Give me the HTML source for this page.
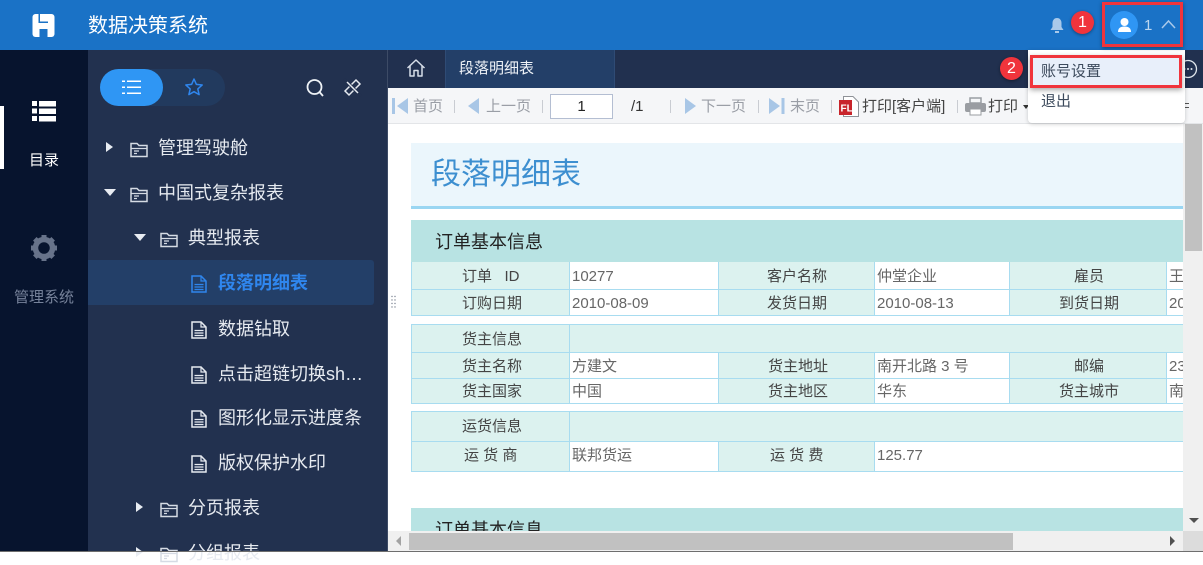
<!DOCTYPE html>
<html lang="zh"><head><meta charset="utf-8"><title>数据决策系统</title>
<style>
html,body{margin:0;padding:0}
body{width:1203px;height:552px;overflow:hidden;position:relative;background:#fff;font-family:"Liberation Sans","Noto Sans CJK SC",sans-serif}
div,span,svg{position:absolute;box-sizing:border-box}
.t{white-space:nowrap;line-height:20px}
.tree{color:#e6eaf0;font-size:18px;line-height:24px;white-space:nowrap;margin-top:1px}
.tb{font-size:15px;color:#9a9ea6;white-space:nowrap;line-height:20px;top:97px}
.sep{width:1px;height:13px;background:#c9ccd2;top:100px}
.c{font-size:15px;line-height:20px;white-space:nowrap;color:#444;text-align:center;margin-top:2px}
.v{font-size:15px;line-height:20px;white-space:nowrap;color:#666;margin-top:2px}
.b{background:#a8dcf0}
.lab{background:#dcf2ef}
</style></head><body>

<!-- header -->
<div style="left:0;top:0;width:1203px;height:50px;background:#1a72c6"></div>
<svg style="left:32px;top:14px" width="23" height="23" viewBox="0 0 23 23"><rect x="0.500" y="0" width="22" height="23" rx="3" fill="#fff"/><path d="M6.500 0H8V7.500H16V9H6.500Z" fill="#1a72c6"/><rect x="7.500" y="15" width="8" height="8" fill="#1a72c6"/></svg>
<div class="t" style="left:88px;top:12px;font-size:20px;line-height:28px;color:#fff">数据决策系统</div>

<!-- left rail -->
<div style="left:0;top:50px;width:88px;height:502px;background:#07142e"></div>
<div style="left:0;top:106px;width:4px;height:63px;background:#fff"></div>
<svg style="left:32px;top:100px" width="24" height="22" viewBox="0 0 24 22" fill="#fff"><rect width="5" height="5" y="1"/><rect width="5" height="5" y="8.500"/><rect width="5" height="5" y="16"/><rect x="7" width="17" height="5.500" y="1"/><rect x="7" width="17" height="5.500" y="8.500"/><rect x="7" width="17" height="5.500" y="16"/></svg>
<div class="t" style="left:29px;top:151px;font-size:15px;color:#fff">目录</div>
<svg style="left:30px;top:234px" width="28" height="28" viewBox="0 0 28 28"><circle cx="14" cy="14" r="8.500" fill="none" stroke="#67738a" stroke-width="5.500"/><g stroke="#67738a" stroke-width="5"><path d="M14 1V6M14 22V27M1 14H6M22 14H27M4.800 4.800L8.300 8.300M19.700 19.700L23.200 23.200M4.800 23.200L8.300 19.700M19.700 8.300L23.200 4.800"/></g></svg>
<div class="t" style="left:14px;top:288px;font-size:15px;color:#76829a">管理系统</div>

<!-- tree panel -->
<div style="left:88px;top:50px;width:299px;height:502px;background:#22314f"></div>
<div style="left:387px;top:50px;width:1px;height:502px;background:#3d4b66"></div>
<div style="left:100px;top:69px;width:125px;height:37px;border-radius:19px;background:#223a5e"></div>
<div style="left:100px;top:69px;width:63px;height:37px;border-radius:19px;background:#2f96f4"></div>
<svg style="left:122px;top:79px" width="20" height="17" viewBox="0 0 20 17" fill="#fff"><rect x="0" y="1.500" width="3" height="1.500"/><rect x="0" y="7.500" width="3" height="1.500"/><rect x="0" y="13.500" width="3" height="1.500"/><rect x="5" y="1.500" width="14" height="1.500"/><rect x="5" y="7.500" width="14" height="1.500"/><rect x="5" y="13.500" width="14" height="1.500"/></svg>
<svg style="left:184px;top:77px" width="20" height="20" viewBox="0 0 20 20"><path d="M10 2L12.400 7.400L18.200 8L13.800 11.900L15.100 17.600L10 14.700L4.900 17.600L6.200 11.900L1.800 8L7.600 7.400Z" fill="none" stroke="#2f86ee" stroke-width="1.500" stroke-linejoin="round"/></svg>
<svg style="left:305px;top:78px" width="20" height="20" viewBox="0 0 20 20"><circle cx="9.500" cy="9" r="7" fill="none" stroke="#eef2f6" stroke-width="1.800"/><path d="M14.500 14L18 18" stroke="#eef2f6" stroke-width="1.800"/></svg>
<svg style="left:343px;top:78px" width="19" height="19" viewBox="0 0 19 19" fill="none" stroke="#e6eaf0" stroke-width="1.500"><path d="M2 13L13 2L17 6L6 17Z"/><path d="M1 1L18 18" stroke="#22314f" stroke-width="3"/><path d="M4 4L15 15"/></svg>

<svg width="0" height="0" style="left:0;top:0"><defs>
<symbol id="fo" viewBox="0 0 18 18"><path d="M1 15.500V2.500H7L9 4.500H17V15.500Z" fill="none" stroke="#d5dbe4" stroke-width="1.500"/><path d="M1 7.500H17M4 10H9M4 12.500H7" stroke="#d5dbe4" stroke-width="1.200"/></symbol>
<symbol id="fi" viewBox="0 0 16 18"><path d="M1 1H10L15 6V17H1Z" fill="none" stroke="#e6eaf0" stroke-width="1.500"/><path d="M10 1V6H15" fill="none" stroke="#e6eaf0" stroke-width="1.200"/><path d="M3.500 9.500H12.500M3.500 12H12.500M3.500 14.500H12.500" stroke="#e6eaf0" stroke-width="1.300"/></symbol>
<symbol id="fb" viewBox="0 0 16 18"><path d="M1 1H10L15 6V17H1Z" fill="none" stroke="#2f86ee" stroke-width="1.500"/><path d="M10 1V6H15" fill="none" stroke="#2f86ee" stroke-width="1.200"/><path d="M3.500 9.500H12.500M3.500 12H12.500M3.500 14.500H12.500" stroke="#2f86ee" stroke-width="1.300"/></symbol>
</defs></svg>

<!-- tree rows -->
<div style="left:106px;top:142px;border-left:7px solid #e8ecf2;border-top:5px solid transparent;border-bottom:5px solid transparent"></div>
<svg style="left:130px;top:141px" width="18" height="18"><use href="#fo"/></svg>
<div class="tree" style="left:158px;top:135px">管理驾驶舱</div>

<div style="left:104px;top:189px;border-top:7px solid #e8ecf2;border-left:6px solid transparent;border-right:6px solid transparent"></div>
<svg style="left:130px;top:186px" width="18" height="18"><use href="#fo"/></svg>
<div class="tree" style="left:158px;top:180px">中国式复杂报表</div>

<div style="left:134px;top:234px;border-top:7px solid #e8ecf2;border-left:6px solid transparent;border-right:6px solid transparent"></div>
<svg style="left:160px;top:231px" width="18" height="18"><use href="#fo"/></svg>
<div class="tree" style="left:188px;top:225px">典型报表</div>

<div style="left:88px;top:260px;width:286px;height:45px;background:#233f68;border-radius:0 3px 3px 0"></div>
<svg style="left:191px;top:275px" width="16" height="18"><use href="#fb"/></svg>
<div class="tree" style="left:218px;top:270px;color:#2f86ee;font-weight:bold">段落明细表</div>

<svg style="left:191px;top:321px" width="16" height="18"><use href="#fi"/></svg>
<div class="tree" style="left:218px;top:316px">数据钻取</div>
<svg style="left:191px;top:366px" width="16" height="18"><use href="#fi"/></svg>
<div class="tree" style="left:218px;top:361px">点击超链切换sh…</div>
<svg style="left:191px;top:410px" width="16" height="18"><use href="#fi"/></svg>
<div class="tree" style="left:218px;top:405px">图形化显示进度条</div>
<svg style="left:191px;top:455px" width="16" height="18"><use href="#fi"/></svg>
<div class="tree" style="left:218px;top:450px">版权保护水印</div>

<div style="left:136px;top:502px;border-left:7px solid #e8ecf2;border-top:5px solid transparent;border-bottom:5px solid transparent"></div>
<svg style="left:160px;top:501px" width="18" height="18"><use href="#fo"/></svg>
<div class="tree" style="left:188px;top:495px">分页报表</div>
<div style="left:136px;top:547px;border-left:7px solid #e8ecf2;border-top:5px solid transparent;border-bottom:5px solid transparent"></div>
<svg style="left:160px;top:546px" width="18" height="18"><use href="#fo"/></svg>
<div class="tree" style="left:188px;top:540px">分组报表</div>

<!-- tab bar -->
<div style="left:388px;top:50px;width:815px;height:38px;background:#21304f"></div>
<div style="left:445px;top:50px;width:170px;height:38px;background:#233f68;border-left:1px solid #2f4b75;border-right:1px solid #2f4b75"></div>
<svg style="left:406px;top:58px" width="20" height="20" viewBox="0 0 20 20" fill="none" stroke="#d6dde8" stroke-width="1.500"><path d="M1.500 10L10 2L18.500 10M4 8V18H8V12.500H12V18H16V8" stroke-linejoin="round"/></svg>
<div class="t" style="left:459px;top:59px;font-size:15px;color:#eef2f7">段落明细表</div>
<svg style="left:1178px;top:59px" width="20" height="20" viewBox="0 0 20 20"><circle cx="10" cy="10" r="8.500" fill="none" stroke="#dfe5ec" stroke-width="1.300"/><circle cx="6.500" cy="10" r="1" fill="#dfe5ec"/><circle cx="10" cy="10" r="1" fill="#dfe5ec"/><circle cx="13.500" cy="10" r="1" fill="#dfe5ec"/></svg>

<!-- toolbar -->
<div style="left:388px;top:88px;width:815px;height:36px;background:#f5f6f8;border-bottom:1px solid #e3e5e8"></div>
<svg style="left:392px;top:97px" width="17" height="18" viewBox="0 0 17 18" fill="#a8c6e6"><rect x="0" y="1" width="3" height="16"/><path d="M16 1V17L5 9Z"/></svg>
<div class="tb" style="left:413px">首页</div><div class="sep" style="left:454px"></div>
<svg style="left:468px;top:98px" width="12" height="16" viewBox="0 0 12 16" fill="#a8c6e6"><path d="M11 0V16L0 8Z"/></svg>
<div class="tb" style="left:486px">上一页</div><div class="sep" style="left:542px"></div>
<div style="left:550px;top:94px;width:63px;height:25px;background:#fff;border:1px solid #b4bed2;font-size:15px;line-height:23px;text-align:center;color:#222">1</div>
<div class="tb" style="left:631px;color:#333">/1</div><div class="sep" style="left:670px"></div>
<svg style="left:684px;top:98px" width="12" height="16" viewBox="0 0 12 16" fill="#a8c6e6"><path d="M1 0V16L12 8Z"/></svg>
<div class="tb" style="left:701px">下一页</div><div class="sep" style="left:758px"></div>
<svg style="left:769px;top:97px" width="16" height="18" viewBox="0 0 16 18" fill="#a8c6e6"><path d="M0 1V17L11 9Z"/><rect x="12.500" y="1" width="3" height="16"/></svg>
<div class="tb" style="left:790px">末页</div><div class="sep" style="left:831px"></div>
<svg style="left:839px;top:96px" width="20" height="21" viewBox="0 0 20 21"><path d="M4.500 .5H14L19.500 6V20.500H4.500Z" fill="#fff" stroke="#8f9298"/><rect x="0" y="4" width="13" height="15" fill="#c8242b"/><text x="1.500" y="15.500" font-size="10" font-weight="bold" fill="#fff" font-family="Liberation Sans">FL</text></svg>
<div class="tb" style="left:862px;color:#444">打印[客户端]</div><div class="sep" style="left:957px"></div>
<svg style="left:965px;top:97px" width="21" height="19" viewBox="0 0 21 19"><path d="M5 1H16V6H5Z" fill="none" stroke="#9a9da2" stroke-width="1.500"/><rect x="0" y="6" width="21" height="9" rx="2" fill="#9a9da2"/><rect x="5" y="12" width="11" height="6" fill="#fff" stroke="#9a9da2"/></svg>
<div class="tb" style="left:988px;color:#444">打印</div>
<div style="left:1023px;top:105px;border-top:4px solid #333;border-left:3.500px solid transparent;border-right:3.500px solid transparent"></div>
<div style="left:1185px;top:103px;width:4px;height:1px;background:#555"></div><div style="left:1185px;top:107px;width:4px;height:1px;background:#555"></div>

<!-- splitter dots -->
<svg style="left:391px;top:295px" width="5" height="15" fill="#7c8492"><circle cx="1" cy="1.500" r=".7"/><circle cx="4" cy="1.500" r=".7"/><circle cx="1" cy="5" r=".7"/><circle cx="4" cy="5" r=".7"/><circle cx="1" cy="8.500" r=".7"/><circle cx="4" cy="8.500" r=".7"/><circle cx="1" cy="12" r=".7"/><circle cx="4" cy="12" r=".7"/></svg>

<!-- report title -->
<div style="left:411px;top:143px;width:772px;height:64px;background:#ebf6fc"></div>
<div style="left:411px;top:206px;width:772px;height:3px;background:#9ad6f2"></div>
<div class="t" style="left:431px;top:155px;font-size:30px;line-height:40px;color:#3d8fd0">段落明细表</div>

<!-- section 1 -->
<div style="left:411px;top:220px;width:772px;height:42px;background:#b8e3e3"></div>
<div class="t" style="left:435px;top:230px;font-size:18px;line-height:24px;color:#222">订单基本信息</div>

<!-- table 1 fills -->
<div class="lab" style="left:411px;top:262px;width:158px;height:54px"></div>
<div class="lab" style="left:718px;top:262px;width:157px;height:54px"></div>
<div class="lab" style="left:1009px;top:262px;width:158px;height:54px"></div>
<div class="b" style="left:411px;top:289px;width:772px;height:1px"></div>
<div class="b" style="left:411px;top:315px;width:772px;height:1px"></div>
<div class="b" style="left:411px;top:262px;width:1px;height:54px"></div>
<div class="b" style="left:569px;top:262px;width:1px;height:54px"></div>
<div class="b" style="left:718px;top:262px;width:1px;height:54px"></div>
<div class="b" style="left:874px;top:262px;width:1px;height:54px"></div>
<div class="b" style="left:1009px;top:262px;width:1px;height:54px"></div>
<div class="b" style="left:1166px;top:262px;width:1px;height:54px"></div>

<div class="c" style="left:462px;top:265px">订单 &nbsp; ID</div>
<div class="v" style="left:572px;top:265px">10277</div>
<div class="c" style="left:767px;top:265px">客户名称</div>
<div class="v" style="left:877px;top:265px">仲堂企业</div>
<div class="c" style="left:1074px;top:265px">雇员</div>
<div class="v" style="left:1169px;top:265px;width:14px;overflow:hidden">王伟</div>
<div class="c" style="left:462px;top:292px">订购日期</div>
<div class="v" style="left:572px;top:292px">2010-08-09</div>
<div class="c" style="left:767px;top:292px">发货日期</div>
<div class="v" style="left:877px;top:292px">2010-08-13</div>
<div class="c" style="left:1059px;top:292px">到货日期</div>
<div class="v" style="left:1169px;top:292px;width:14px;overflow:hidden">2010</div>

<!-- table 2 -->
<div class="lab" style="left:411px;top:324px;width:772px;height:28px"></div>
<div class="lab" style="left:411px;top:352px;width:158px;height:52px"></div>
<div class="lab" style="left:718px;top:352px;width:157px;height:52px"></div>
<div class="lab" style="left:1009px;top:352px;width:158px;height:52px"></div>
<div class="b" style="left:411px;top:324px;width:772px;height:1px"></div>
<div class="b" style="left:411px;top:352px;width:772px;height:1px"></div>
<div class="b" style="left:411px;top:378px;width:772px;height:1px"></div>
<div class="b" style="left:411px;top:403px;width:772px;height:1px"></div>
<div class="b" style="left:411px;top:324px;width:1px;height:80px"></div>
<div class="b" style="left:569px;top:324px;width:1px;height:80px"></div>
<div class="b" style="left:718px;top:352px;width:1px;height:52px"></div>
<div class="b" style="left:874px;top:352px;width:1px;height:52px"></div>
<div class="b" style="left:1009px;top:352px;width:1px;height:52px"></div>
<div class="b" style="left:1166px;top:352px;width:1px;height:52px"></div>

<div class="c" style="left:462px;top:328px">货主信息</div>
<div class="c" style="left:462px;top:355px">货主名称</div>
<div class="v" style="left:572px;top:355px">方建文</div>
<div class="c" style="left:768px;top:355px">货主地址</div>
<div class="v" style="left:877px;top:355px">南开北路 3 号</div>
<div class="c" style="left:1074px;top:355px">邮编</div>
<div class="v" style="left:1169px;top:355px;width:14px;overflow:hidden">230</div>
<div class="c" style="left:462px;top:380px">货主国家</div>
<div class="v" style="left:572px;top:380px">中国</div>
<div class="c" style="left:768px;top:380px">货主地区</div>
<div class="v" style="left:877px;top:380px">华东</div>
<div class="c" style="left:1059px;top:380px">货主城市</div>
<div class="v" style="left:1169px;top:380px;width:14px;overflow:hidden">南京</div>

<!-- table 3 -->
<div class="lab" style="left:411px;top:411px;width:772px;height:30px"></div>
<div class="lab" style="left:411px;top:441px;width:158px;height:31px"></div>
<div class="lab" style="left:718px;top:441px;width:157px;height:31px"></div>
<div class="b" style="left:411px;top:411px;width:772px;height:1px"></div>
<div class="b" style="left:411px;top:441px;width:772px;height:1px"></div>
<div class="b" style="left:411px;top:471px;width:772px;height:1px"></div>
<div class="b" style="left:411px;top:411px;width:1px;height:61px"></div>
<div class="b" style="left:569px;top:411px;width:1px;height:61px"></div>
<div class="b" style="left:718px;top:441px;width:1px;height:31px"></div>
<div class="b" style="left:874px;top:441px;width:1px;height:31px"></div>
<div class="c" style="left:462px;top:415px">运货信息</div>
<div class="c" style="left:464px;top:444px">运 货 商</div>
<div class="v" style="left:572px;top:444px">联邦货运</div>
<div class="c" style="left:770px;top:444px">运 货 费</div>
<div class="v" style="left:877px;top:444px">125.77</div>

<!-- section 2 -->
<div style="left:411px;top:508px;width:772px;height:24px;background:#b8e3e3"></div>
<div class="t" style="left:435px;top:518px;font-size:18px;line-height:24px;color:#222">订单基本信息</div>

<!-- scrollbars -->
<div style="left:1183px;top:124px;width:20px;height:407px;background:#f0f0f0"></div>
<div style="left:1185px;top:124px;width:17px;height:127px;background:#c1c1c1"></div>
<div style="left:1189px;top:518px;border-top:5px solid #505050;border-left:5px solid transparent;border-right:5px solid transparent"></div>
<div style="left:388px;top:531px;width:795px;height:20px;background:#f0f0f0"></div>
<div style="left:1183px;top:531px;width:20px;height:20px;background:#dcdcdc"></div>
<div style="left:409px;top:533px;width:604px;height:17px;background:#c1c1c1"></div>
<div style="left:396px;top:536px;border-right:5px solid #a3a3a3;border-top:5px solid transparent;border-bottom:5px solid transparent"></div>
<div style="left:1170px;top:536px;border-left:5px solid #505050;border-top:5px solid transparent;border-bottom:5px solid transparent"></div>
<div style="left:0;top:551px;width:1203px;height:1px;background:#6e6e6e"></div>

<!-- header right -->
<svg style="left:1049px;top:17px" width="16" height="17" viewBox="0 0 16 17" fill="#a9c9ea"><path d="M8 1C5 1 3.500 3.500 3.500 6V10L1.500 13H14.500L12.500 10V6C12.500 3.500 11 1 8 1Z"/><rect x="6" y="14" width="4" height="2"/></svg>
<div style="left:1110px;top:11px;width:28px;height:28px;border-radius:50%;background:#2f96f4"></div>
<svg style="left:1116px;top:17px" width="17" height="17" viewBox="0 0 17 17" fill="#fff"><circle cx="8.500" cy="5" r="4"/><path d="M2 15Q2 9.500 8.500 9.500Q15 9.500 15 15Z"/></svg>
<div class="t" style="left:1144px;top:16px;font-size:15px;color:#bcd6ef">1</div>
<svg style="left:1161px;top:19px" width="15" height="11" viewBox="0 0 15 11" fill="none" stroke="#a9c9ea" stroke-width="1.500"><path d="M1 9L7.500 2L14 9"/></svg>

<!-- dropdown -->
<div style="left:1028px;top:50px;width:157px;height:73px;background:#fff;border-radius:0 0 4px 4px;box-shadow:0 1px 4px rgba(0,0,0,.2)"></div>
<div style="left:1030px;top:55px;width:152px;height:33px;background:#e8effa;box-shadow:0 2px 5px rgba(0,0,0,.35)"></div>
<div class="t" style="left:1041px;top:62px;font-size:15px;color:#3c4a5c">账号设置</div>
<div class="t" style="left:1041px;top:92px;font-size:15px;color:#3c4a5c">退出</div>

<!-- annotations -->
<div style="left:1102px;top:2px;width:81px;height:45px;border:3px solid #f0343c;box-shadow:0 1px 4px rgba(0,0,0,.4)"></div>
<div style="left:1030px;top:55px;width:152px;height:33px;border:3px solid #f0343c"></div>
<div style="left:1071px;top:11px;width:23px;height:23px;border-radius:50%;background:#f0343c;box-shadow:0 1px 3px rgba(0,0,0,.4);color:#fff;font-size:16px;line-height:23px;text-align:center">1</div>
<div style="left:1000px;top:57px;width:23px;height:23px;border-radius:50%;background:#f0343c;box-shadow:0 1px 3px rgba(0,0,0,.4);color:#fff;font-size:16px;line-height:23px;text-align:center">2</div>

</body></html>
